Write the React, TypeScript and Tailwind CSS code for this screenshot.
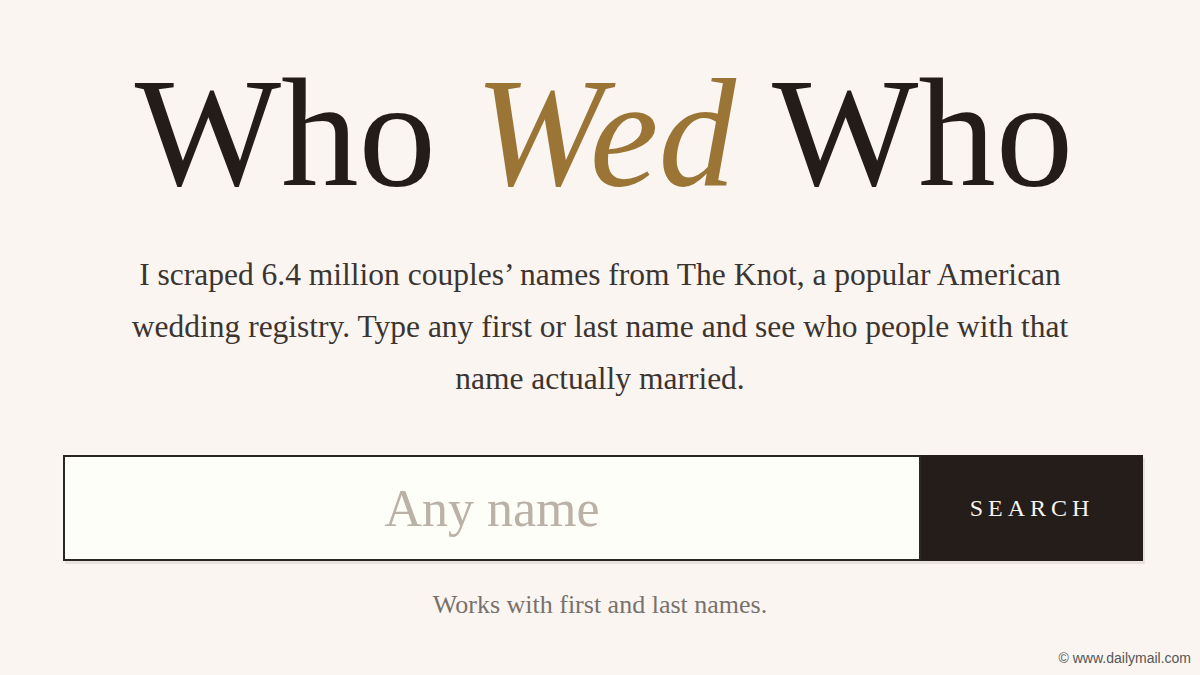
import React from 'react'

const serif = { fontFamily: '"Liberation Serif", "DejaVu Serif", serif' }

const App: React.FC = () => {
  return (
    <div
      className="relative w-[1200px] h-[675px] overflow-hidden bg-[#faf5f1] flex flex-col items-center"
      style={serif}
    >
      <h1 className="mt-[56px] ml-[8px] text-[155px] leading-[1] text-[#231c18] whitespace-nowrap">
        Who <span className="italic text-[#9b7536]">Wed</span> Who
      </h1>

      <p className="mt-[38px] w-[1000px] text-center text-[31.5px] leading-[52px] text-[#3b3430]">
        I scraped 6.4 million couples’ names from The Knot, a popular American
        <br />
        wedding registry. Type any first or last name and see who people with that
        <br />
        name actually married.
      </p>

      <form className="mt-[50px] ml-[6px] flex w-[1080px] h-[106px] shadow-[2px_3px_0_#e8e2dd]" onSubmit={e => e.preventDefault()}>
        <input
          type="text"
          placeholder="Any name"
          className="flex-1 min-w-0 h-full bg-[#fefef9] border-2 border-[#2a2624] text-center text-[52px] text-[#231c18] placeholder:text-[#bab1a7] outline-none"
          style={serif}
        />
        <button
          type="submit"
          className="w-[222px] h-full bg-[#241d1a] text-[#f8f4ef] text-[24px] tracking-[5px] uppercase"
          style={serif}
        >
          Search
        </button>
      </form>

      <p className="mt-[24px] text-[26px] text-[#78716b]">Works with first and last names.</p>

      <div
        className="absolute right-[5px] bottom-[6px] text-[14px] text-[#555] px-1"
        style={{ fontFamily: '"Liberation Sans", Arial, sans-serif' }}
      >
        © www.dailymail.com
      </div>
    </div>
  )
}

export default App
